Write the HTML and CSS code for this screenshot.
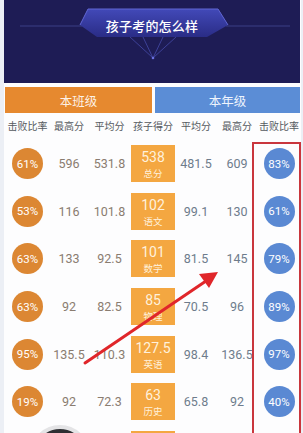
FILE: index.html
```html
<!DOCTYPE html>
<html lang="zh-CN">
<head>
<meta charset="utf-8">
<title>孩子考的怎么样</title>
<link rel="stylesheet" href="styles.css">
</head>
<body>
<div class="page">
  <header class="hero">
    <svg class="hero-art" viewBox="0 0 296 83" width="296" height="83" aria-hidden="true">
      <defs>
        <linearGradient id="bannerFill" x1="0" y1="0" x2="0" y2="1">
          <stop offset="0" stop-color="#4249b8"/>
          <stop offset="1" stop-color="#2a2c86"/>
        </linearGradient>
      </defs>
      <line x1="16" y1="26" x2="78" y2="26" stroke="#3a3f86" stroke-width="1"/>
      <line x1="222" y1="26" x2="286" y2="26" stroke="#3a3f86" stroke-width="1"/>
      <g stroke="#4c53b8" stroke-width="0.8" fill="none" opacity="0.85">
        <line x1="126" y1="37" x2="149" y2="58"/>
        <line x1="139" y1="37" x2="149" y2="58"/>
        <line x1="159" y1="37" x2="149" y2="58"/>
        <line x1="172" y1="37" x2="149" y2="58"/>
      </g>
      <polygon points="84,9 214,9 224,25 203,37 93,37 76,25" fill="url(#bannerFill)"/>
      <polyline points="76,25 84,9 214,9 224,25" fill="none" stroke="#6066d4" stroke-width="1"/>
      <circle cx="149" cy="58" r="1.3" fill="#6a70e0"/>
    </svg>
    <h1 class="hero-title">孩子考的怎么样</h1>
  </header>

  <nav class="tabs">
    <div class="tab tab-class">本班级</div>
    <div class="tab tab-grade">本年级</div>
  </nav>

  <div class="table">
    <div class="thead">
      <span>击败比率</span><span>最高分</span><span>平均分</span><span>孩子得分</span><span>平均分</span><span>最高分</span><span>击败比率</span>
    </div>

    <div class="row">
      <span class="badge badge-class">61%</span><span class="num num-class">596</span><span class="num num-class">531.8</span>
      <div class="score"><b>538</b><i>总分</i></div>
      <span class="num num-grade">481.5</span><span class="num num-grade">609</span><span class="badge badge-grade">83%</span>
    </div>
    <div class="row">
      <span class="badge badge-class">53%</span><span class="num num-class">116</span><span class="num num-class">101.8</span>
      <div class="score"><b>102</b><i>语文</i></div>
      <span class="num num-grade">99.1</span><span class="num num-grade">130</span><span class="badge badge-grade">61%</span>
    </div>
    <div class="row">
      <span class="badge badge-class">63%</span><span class="num num-class">133</span><span class="num num-class">92.5</span>
      <div class="score"><b>101</b><i>数学</i></div>
      <span class="num num-grade">81.5</span><span class="num num-grade">145</span><span class="badge badge-grade">79%</span>
    </div>
    <div class="row">
      <span class="badge badge-class">63%</span><span class="num num-class">92</span><span class="num num-class">82.5</span>
      <div class="score"><b>85</b><i>物理</i></div>
      <span class="num num-grade">70.5</span><span class="num num-grade">96</span><span class="badge badge-grade">89%</span>
    </div>
    <div class="row">
      <span class="badge badge-class">95%</span><span class="num num-class">135.5</span><span class="num num-class">110.3</span>
      <div class="score"><b>127.5</b><i>英语</i></div>
      <span class="num num-grade">98.4</span><span class="num num-grade">136.5</span><span class="badge badge-grade">97%</span>
    </div>
    <div class="row">
      <span class="badge badge-class">19%</span><span class="num num-class">92</span><span class="num num-class">72.3</span>
      <div class="score"><b>63</b><i>历史</i></div>
      <span class="num num-grade">65.8</span><span class="num num-grade">92</span><span class="badge badge-grade">40%</span>
    </div>
    <div class="row">
      <span class="badge badge-class"></span><span class="num num-class"></span><span class="num num-class"></span>
      <div class="score"></div>
      <span class="num num-grade"></span><span class="num num-grade"></span><span class="badge badge-grade"></span>
    </div>
  </div>

  <div class="highlight"></div>
  <svg class="arrow" viewBox="0 0 303 433" width="303" height="433" aria-hidden="true">
    <line x1="85" y1="363" x2="206" y2="281" stroke="#e0262a" stroke-width="3" stroke-linecap="round"/>
    <polygon points="218,272 209,288 199,274" fill="#e0262a"/>
  </svg>
  <div class="float-btn"></div>
</div>
</body>
</html>
```

FILE: styles.css
```css
html, body {
  margin: 0;
  padding: 0;
}
body {
  background: #eceff5;
  font-family: "Roboto", "Noto Sans CJK SC", sans-serif;
  overflow: hidden;
  height: 433px;
}
.page {
  position: relative;
  margin-left: 4px;
  width: 297px;
  min-height: 433px;
  background: #fdfdfe;
}

/* header */
.hero {
  display: grid;
  height: 83px;
  width: 296px;
  background: #1e1c55;
}
.hero-art,
.hero-title {
  grid-area: 1 / 1;
}
.hero-art {
  display: block;
}
.hero-title {
  margin: 18px 0 0;
  align-self: start;
  justify-self: center;
  font-size: 13px;
  line-height: 18px;
  font-weight: 500;
  color: #ffffff;
  letter-spacing: 0.2px;
}

/* tabs */
.tabs {
  display: flex;
  gap: 3px;
  margin: 4px 1px 0 1px;
  height: 26px;
}
.tab {
  display: flex;
  align-items: center;
  justify-content: center;
  font-size: 12.5px;
  color: #fdf1e6;
}
.tab-class {
  width: 147px;
  background: #e6892f;
}
.tab-grade {
  flex: 1;
  background: #5b8dd6;
  color: #eef4fd;
}

/* table */
.table {
  margin-left: 1px;
}
.thead,
.row {
  display: grid;
  grid-template-columns: 45px 38px 43px 44px 42px 40px 44px;
  justify-items: center;
  align-items: center;
}
.thead {
  height: 27px;
  font-size: 10px;
  line-height: 12px;
  color: #555a60;
  white-space: nowrap;
}
.row {
  height: 47.6px;
}
.badge {
  width: 31px;
  height: 31px;
  border-radius: 50%;
  display: flex;
  align-items: center;
  justify-content: center;
  font-size: 11.5px;
  color: #ffffff;
}
.badge-class {
  background: #dc8733;
}
.badge-grade {
  background: #5a89d3;
}
.num {
  font-size: 12.5px;
  white-space: nowrap;
}
.num-class {
  color: #8a7c70;
}
.num-grade {
  color: #6e7c8c;
}
.score {
  width: 44px;
  height: 37px;
  box-sizing: border-box;
  padding-top: 4px;
  background: #f4a741;
  display: flex;
  flex-direction: column;
  align-items: center;
  gap: 2px;
}
.score b {
  font-weight: 400;
  font-size: 14px;
  line-height: 17px;
  color: #fff1dc;
}
.score i {
  font-style: normal;
  font-size: 9.5px;
  line-height: 12px;
  color: #fff1dc;
}

/* overlays */
.highlight {
  position: absolute;
  left: 248px;
  top: 142px;
  width: 49px;
  height: 320px;
  box-sizing: border-box;
  border: 2px solid #c9363d;
  border-bottom: none;
}
.arrow {
  position: absolute;
  left: -4px;
  top: 0;
  pointer-events: none;
}
.float-btn {
  position: absolute;
  left: 26px;
  top: 425px;
  width: 60px;
  height: 60px;
  box-sizing: border-box;
  border-radius: 50%;
  border: 4px solid #e4e4e6;
  background: #2e2f33;
}
```
